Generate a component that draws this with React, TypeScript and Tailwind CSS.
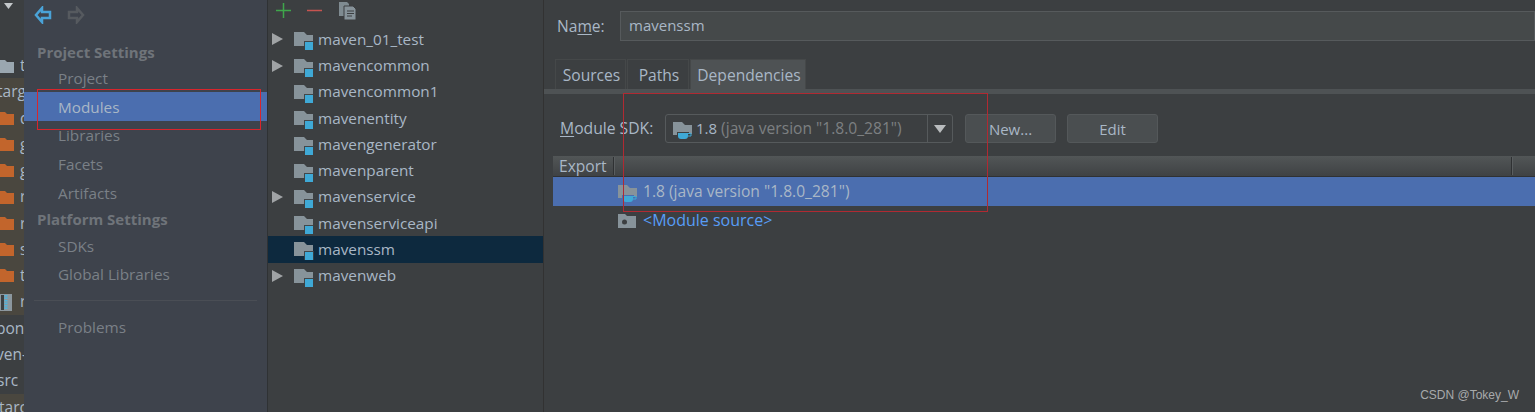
const font = { fontFamily: '"Open Sans", "Noto Sans", sans-serif' };

function ModuleFolder() {
  return (
    <svg width="20" height="18" viewBox="0 0 20 18" className="shrink-0 mt-[4px]">
      <path d="M0 0h10l3 3h6v11H0z" fill="#87939a" />
      <rect x="10" y="9" width="10" height="9" fill="#3c3f41" fillOpacity="0.9" />
      <rect x="11" y="10" width="8" height="8" fill="#3fa9d6" />
    </svg>
  );
}

function JavaFolder({ bg }: { bg: string }) {
  return (
    <svg width="20" height="18" viewBox="0 0 20 18" className="shrink-0 mt-[5px]">
      <path d="M0 0h9l3 3h7v10H0z" fill="#87939a" />
      <path d="M4 10h12v2h3v3h-4l-1 2H7l-3-3z" fill={bg} />
      <path d="M5 11h10v3q0 3-3 3H8q-3 0-3-3z" fill="#3fa9d6" />
      <path d="M15 11.500h3v2.500h-3" fill="none" stroke="#3fa9d6" strokeWidth="1" />
    </svg>
  );
}

function SourceFolder() {
  return (
    <svg width="18" height="14" viewBox="0 0 18 14" className="shrink-0">
      <path d="M0 0h7l2 2h9v12H0z" fill="#87939a" />
      <circle cx="6.500" cy="8" r="2.500" fill="#3c3f41" />
    </svg>
  );
}

function SmallFolder({ color }: { color: string }) {
  return (
    <svg width="14" height="13" viewBox="0 0 14 13" className="shrink-0 mr-1">
      <path d="M0 0h5l2 2h7v11H0z" fill={color} />
    </svg>
  );
}

function Strip() {
  const brown = ['d', 'g', 'g', 'r', 'r', 's', 't'];
  return (
    <div className="w-6 shrink-0 flex flex-col overflow-hidden text-[15.500px] text-[#a9b7c6] bg-[#3c3f41]">
      <div className="h-[54px] shrink-0 pl-[3px] pt-[3px]">
        <svg width="12" height="8" viewBox="0 0 12 8"><path d="M1 0h9L5.500 6z" fill="#c4c8ca" /></svg>
      </div>
      <div className="h-[24px] shrink-0 flex items-center whitespace-nowrap">
        <SmallFolder color="#9aa7b0" /><span className="ml-[2px]">t</span>
      </div>
      <div className="bg-[#4a473f] h-[237px] shrink-0 flex flex-col">
        <div className="h-[27px] shrink-0 -ml-[3px] flex items-center">targ</div>
        {brown.map((b, i) => (
          <div key={i} className="h-[26.300px] shrink-0 flex items-center whitespace-nowrap">
            <SmallFolder color="#c2652c" /><span className="ml-[2px]">{b}</span>
          </div>
        ))}
        <div className="h-[26px] shrink-0 flex items-center whitespace-nowrap">
          <svg width="12" height="17" viewBox="0 0 12 17" className="shrink-0 mr-[8px]">
            <rect width="12" height="17" fill="#8c979e" />
            <rect x="1" y="1" width="3" height="15" fill="#3c3f41" />
            <path d="M6 1v15" stroke="#4fb3dc" strokeWidth="3" strokeDasharray="1.500 1" />
          </svg>
          <span>r</span>
        </div>
      </div>
      <div className="h-[27px] shrink-0 -ml-[4px] flex items-center whitespace-nowrap">pon</div>
      <div className="h-[26px] shrink-0 -ml-[4px] flex items-center whitespace-nowrap">ven-</div>
      <div className="h-[26px] shrink-0 -ml-[3px] flex items-center whitespace-nowrap">src</div>
      <div className="h-[18px] shrink-0 bg-[#4a473f] -ml-[1px] leading-[26px] whitespace-nowrap">tarc</div>
    </div>
  );
}

function NavItem({ label, active, nudge }: { label: string; active?: boolean; nudge?: boolean }) {
  return (
    <div className={`h-[29px] flex items-center pl-[34px] ${nudge ? 'pt-[1px]' : ''} ${active ? 'bg-[#4b6eaf] text-[#a9b7c6]' : 'text-[#7a8087]'}`}>
      {label}
    </div>
  );
}

function Sidebar() {
  return (
    <div className="w-[243px] shrink-0 bg-[#3e434c] text-[15.300px] flex flex-col border-r border-[#2f3234] box-content">
      <div className="h-[37px] flex items-center gap-[15px] pl-[10px] pb-[8px]">
        <svg width="18" height="18" viewBox="0 0 18 18"><path d="M8 2 2 9l6 7v-4h8V6H8z" fill="none" stroke="#4aa3d8" strokeWidth="2.500" /></svg>
        <svg width="18" height="18" viewBox="0 0 18 18"><path d="M10 2l6 7-6 7v-4H2V6h8z" fill="none" stroke="#565a5f" strokeWidth="2.500" /></svg>
      </div>
      <div className="h-[26px] mt-[2px] flex items-center pl-[13px] font-bold text-[15px] text-[#6f747a]">Project Settings</div>
      <div className="-mt-[2px]">
        <NavItem label="Project" nudge />
      </div>
      <NavItem label="Modules" active nudge />
      <NavItem label="Libraries" />
      <NavItem label="Facets" />
      <NavItem label="Artifacts" />
      <div className="h-[25px] pb-[3px] flex items-center pl-[13px] font-bold text-[15px] text-[#6f747a]">Platform Settings</div>
      <div className="h-[27px] pb-[1px] flex items-center pl-[34px] text-[#7a8087]">SDKs</div>
      <div className="h-[29px] flex items-center pl-[34px] text-[#7a8087]">Global Libraries</div>
      <div className="h-px bg-[#4a4e55] mx-[10px] mt-[11px]" />
      <div className="h-[29px] mt-[12px] flex items-center pl-[34px] text-[#7a8087]">Problems</div>
    </div>
  );
}

const modules = [
  { n: 'maven_01_test', a: true },
  { n: 'mavencommon', a: true },
  { n: 'mavencommon1' },
  { n: 'mavenentity' },
  { n: 'mavengenerator' },
  { n: 'mavenparent' },
  { n: 'mavenservice', a: true },
  { n: 'mavenserviceapi' },
  { n: 'mavenssm', s: true },
  { n: 'mavenweb', a: true },
];

function Tree() {
  return (
    <div className="w-[276px] shrink-0 bg-[#3c3f41] text-[15.300px] text-[#a9b7c6] border-r border-[#323232] box-border">
      <div className="h-[26.300px] flex items-center pl-[7px] pb-[5px]">
        <svg width="17" height="17" viewBox="0 0 17 17"><path d="M8.500 1v15M1 8.500h15" stroke="#3fa64b" strokeWidth="1.500" /></svg>
        <svg width="17" height="17" viewBox="0 0 17 17" className="ml-[14px]"><path d="M1 8.500h15" stroke="#c75450" strokeWidth="1.500" /></svg>
        <svg width="20" height="20" viewBox="0 0 20 20" className="ml-[15px]"><path d="M1 1h8l2 2v12H1z" fill="#7f8b91" /><path d="M6 5h9l3 3v11H6z" fill="#87939a" stroke="#3c3f41" /><path d="M9 10h7M9 12.500h7M9 15h5" stroke="#3c3f41" /></svg>
      </div>
      {modules.map((m) => (
        <div key={m.n} className={`h-[26.250px] flex items-center ${m.s ? 'bg-[#0d293e]' : ''}`}>
          <span className="w-[26px] pl-[4px] shrink-0 flex">
            {m.a && <svg width="11" height="12" viewBox="0 0 11 12"><path d="M0 0l11 6-11 6z" fill="#a0a3a5" /></svg>}
          </span>
          <ModuleFolder />
          <span className="ml-[4px]">{m.n}</span>
        </div>
      ))}
    </div>
  );
}

function Tab({ label, active, w }: { label: string; active?: boolean; w: string }) {
  return (
    <div className={`${w} h-[30px] pt-[3px] pl-[2px] flex items-center justify-center border border-b-0 border-[#454849] ${active ? 'bg-[#4e5254]' : 'bg-[#3c3f41]'}`}>
      {label}
    </div>
  );
}

function Detail() {
  return (
    <div className="flex-1 min-w-0 bg-[#3c3f41] text-[15.600px] text-[#a9b7c6] flex flex-col relative">
      <div className="h-[59px] pt-[11px] pl-[13px] flex items-start">
        <div className="h-[30px] w-[63px] pt-[1px] flex items-center">
          <span>Na<span className="underline underline-offset-2">m</span>e:</span>
        </div>
        <div className="flex-1 h-[30px] bg-[#45494a] border border-[#565a5c] flex items-center pl-[8px] pb-[1px] text-[15px]">mavenssm</div>
      </div>
      <div className="flex pl-[11px] gap-px">
        <Tab label="Sources" w="w-[71px]" />
        <Tab label="Paths" w="w-[62px]" />
        <Tab label="Dependencies" active w="w-[116px]" />
      </div>
      <div className="h-[5px] bg-[#4e5254]" />
      <div className="h-[20px]" />
      <div className="flex items-center h-[29px] pl-[16px]">
        <span className="w-[105px] pt-[1px] text-[15.700px] text-[#a9b7c6]"><span className="underline underline-offset-2">M</span>odule SDK:</span>
        <div className="w-[288px] h-[29px] border border-[#565a5c] rounded-[3px] flex items-center">
          <div className="flex-1 flex items-center pl-[7px] min-w-0">
            <JavaFolder bg="#3c3f41" />
            <span className="ml-[3px] text-[15px]">1.8</span>
            <span className="ml-[4px] text-[#7d8082]">(java version "1.8.0_281")</span>
          </div>
          <div className="w-[25px] h-full border-l border-[#565a5c] flex items-center justify-center">
            <svg width="12" height="8" viewBox="0 0 12 8"><path d="M0 0h12L6 8z" fill="#b9bcbe" /></svg>
          </div>
        </div>
        <div className="w-[91px] h-[29px] ml-[12px] pt-[1px] bg-[#4a4e50] border border-[#54585a] rounded-[3px] flex items-center justify-center text-[15px]">New...</div>
        <div className="w-[91px] h-[29px] ml-[11px] pt-[1px] bg-[#4a4e50] border border-[#54585a] rounded-[3px] flex items-center justify-center text-[15px]">Edit</div>
      </div>
      <div className="h-[13px]" />
      <div className="ml-[9px] flex-1 flex flex-col">
        <div className="h-[21px] bg-gradient-to-b from-[#525657] to-[#3f4244] border-b border-[#2f3133] flex items-center pl-[6px] pt-[1px] relative">
          <span>Export</span>
          <span className="absolute left-[60px] top-[1px] bottom-[1px] w-[2px] bg-[#2f3133] border-r border-[#5a5e60]" />
          <span className="absolute left-[958px] top-[1px] bottom-[1px] w-[2px] bg-[#2f3133] border-r border-[#5a5e60]" />
        </div>
        <div className="h-[29px] bg-[#4b6eaf] flex items-center pl-[65px] overflow-hidden">
          <JavaFolder bg="#4b6eaf" />
          <span className="ml-[5px] pt-[1px]">1.8 (java version "1.8.0_281")</span>
        </div>
        <div className="h-[29px] flex items-center pl-[65px]">
          <SourceFolder />
          <span className="ml-[7px] pb-[1px] text-[16px] text-[#589df6]">&lt;Module source&gt;</span>
        </div>
      </div>
      <span className="absolute right-[16px] bottom-[8px] text-[12px] text-[#a8aaab]" style={{ fontFamily: '"Liberation Sans", sans-serif' }}>CSDN @Tokey_W</span>
    </div>
  );
}

export default function App() {
  return (
    <div className="w-[1535px] h-[412px] flex overflow-hidden relative bg-[#3c3f41]" style={font}>
      <Strip />
      <Sidebar />
      <Tree />
      <Detail />
      <div className="absolute left-[37px] top-[89px] w-[224px] h-[41px] border border-[#d9252c]" />
      <div className="absolute left-[623px] top-[93px] w-[365px] h-[119px] border border-[#b02a32]" />
    </div>
  );
}
